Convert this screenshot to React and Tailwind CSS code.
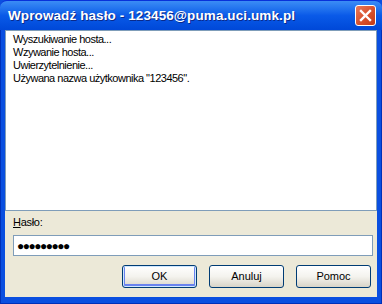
export default function App() {
  const log = [
    "Wyszukiwanie hosta...",
    "Wzywanie hosta...",
    "Uwierzytelnienie...",
    'Używana nazwa użytkownika "123456".',
  ];

  return (
    <div
      className="w-[382px] h-[304px] flex flex-col bg-[#0a4fe0] overflow-hidden"
      style={{ fontFamily: '"Liberation Sans", Arial, sans-serif' }}
    >
      {/* title bar */}
      <div className="h-[30px] shrink-0 flex items-center pl-[8px] pr-[6px] rounded-t-[7px] bg-gradient-to-b from-[#3b8cf5] via-[#0a5ae8] to-[#0048d8] border-t border-[#0831d9]">
        <div className="flex-1 text-white font-bold text-[13.5px] tracking-[0.1px] leading-none [text-shadow:1px_1px_0_#0a2a8a]">
          Wprowadź hasło - 123456@puma.uci.umk.pl
        </div>
        <div className="w-[21px] h-[21px] rounded-[3px] border border-white bg-gradient-to-br from-[#e8795a] via-[#d9532f] to-[#c33a16] flex items-center justify-center">
          <svg width="13" height="13" viewBox="0 0 13 13">
            <path d="M2 2 L11 11 M11 2 L2 11" stroke="white" strokeWidth="2.4" strokeLinecap="square" />
          </svg>
        </div>
      </div>

      {/* client area */}
      <div className="flex-1 flex px-[4px] pb-[6px] border-x border-b border-[#0030b8]">
        <div className="flex-1 flex flex-col bg-[#ece9d8] text-[11px] text-black">
          <div className="h-[181px] bg-white border border-[#7f9db9] pl-[7px] pt-[2px] leading-[13px] tracking-[-0.5px]">
            {log.map((line) => (
              <div key={line}>{line}</div>
            ))}
          </div>

          <div className="ml-[8px] mt-[5px] leading-[13px] tracking-[-0.3px]">
            <span className="underline">H</span>asło:
          </div>

          <div className="ml-[8px] mt-[6px] w-[360px] h-[21px] bg-white border border-[#7f9db9] flex items-center pl-[3px]">
            <span className="text-[12px] tracking-[-1.5px] leading-none">●●●●●●●●●</span>
          </div>

          <div className="flex justify-end gap-[12px] mr-[6px] mt-[9px]">
            {["OK", "Anuluj", "Pomoc"].map((label, i) => (
              <div
                key={label}
                className={`w-[75px] h-[23px] rounded-[3px] border border-[#003c74] bg-gradient-to-b from-white via-[#f4f3ee] to-[#d8d4c8] flex items-center justify-center ${
                  i === 0 ? "shadow-[inset_0_0_0_1px_#cee7ff,inset_0_-1px_0_2px_#6982ee]" : ""
                }`}
              >
                {label}
              </div>
            ))}
          </div>
        </div>
      </div>
    </div>
  );
}
